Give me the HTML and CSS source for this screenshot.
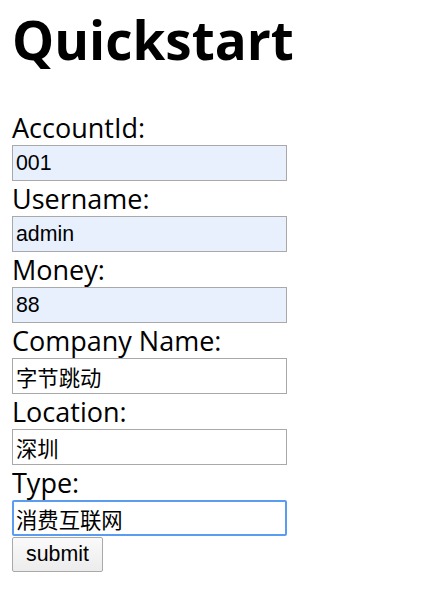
FILE: index.html
```html
<!DOCTYPE html>
<html lang="zh">
<head>
<meta charset="utf-8">
<title>Quickstart</title>
<link rel="stylesheet" href="styles.css">
</head>
<body>
<h1 class="title">Quickstart</h1>
<form class="form">
  <label class="label" for="acc">AccountId:</label>
  <input class="field autofill" id="acc" type="text" value="001">
  <label class="label" for="user">Username:</label>
  <input class="field autofill" id="user" type="text" value="admin">
  <label class="label" for="money">Money:</label>
  <input class="field autofill" id="money" type="text" value="88">
  <label class="label" for="company">Company Name:</label>
  <input class="field" id="company" type="text" value="字节跳动">
  <label class="label" for="loc">Location:</label>
  <input class="field" id="loc" type="text" value="深圳">
  <label class="label" for="type">Type:</label>
  <input class="field focused" id="type" type="text" value="消费互联网">
  <button class="submit" type="button">submit</button>
</form>
</body>
</html>
```
FILE: styles.css
```css
html, body {
  margin: 0;
  background: #fff;
}
body {
  padding: 0 12px;
  font-family: "Open Sans", "Noto Sans", "Noto Sans CJK SC", sans-serif;
  color: #000;
}
.title {
  margin: 0 0 34px;
  padding-top: 4px;
  font-size: 53px;
  line-height: 72px;
  font-weight: 700;
}
.form {
  display: flex;
  flex-direction: column;
  align-items: flex-start;
}
.label {
  display: block;
  height: 35px;
  line-height: 35px;
  font-size: 27px;
}
.field {
  box-sizing: border-box;
  width: 275px;
  height: 36px;
  margin: 0;
  padding: 1px 3px;
  border: 1px solid #a9a9a9;
  background: #fff;
  font-family: "Liberation Sans", "Noto Sans CJK SC", sans-serif;
  font-size: 21.33px;
  color: #000;
  outline: none;
}
.autofill {
  background: #e8f0fe;
}
.focused {
  border: 2px solid #5a9cf0;
  border-radius: 2px;
  padding: 0 2px;
}
.submit {
  box-sizing: border-box;
  width: 91px;
  height: 35px;
  margin: 1px 0 0;
  padding: 0;
  border: 1px solid #a9a9a9;
  border-radius: 2px;
  background: linear-gradient(#fafafa, #ececec);
  font-family: "Liberation Sans", sans-serif;
  font-size: 21.33px;
  color: #000;
}
```
